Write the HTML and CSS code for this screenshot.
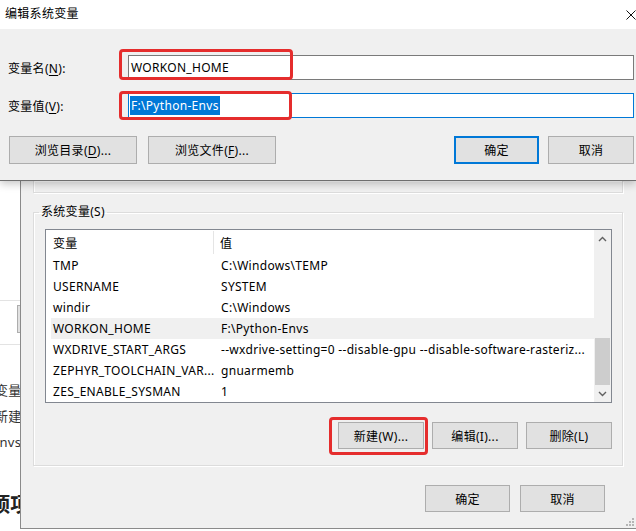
FILE: index.html
```html
<!DOCTYPE html>
<html lang="zh-CN">
<head>
    <meta charset="UTF-8">
    <title>编辑系统变量</title>
    <link rel="stylesheet" href="styles.css">
</head>
<body>
    <!-- Página de fundo (só a borda esquerda aparece) -->
    <div class="page">
        <div class="page-bar"><span class="page-btn"></span></div>
        <p class="page-line">变量</p>
        <p class="page-line">新建</p>
        <p class="page-line page-line-shift">Envs</p>
        <h2 class="page-head">顶项</h2>
    </div>

    <!-- Janela de variáveis de ambiente -->
    <div class="env-dialog">
        <div class="group group-user"></div>
        <fieldset class="group group-system">
            <legend>系统变量(S)</legend>
            <div class="var-list">
                <div class="var-main">
                    <div class="var-head">
                        <span class="col-name">变量</span>
                        <span class="col-value">值</span>
                    </div>
                    <div class="var-row"><span class="col-name">TMP</span><span class="col-value">C:\Windows\TEMP</span></div>
                    <div class="var-row"><span class="col-name">USERNAME</span><span class="col-value">SYSTEM</span></div>
                    <div class="var-row"><span class="col-name">windir</span><span class="col-value">C:\Windows</span></div>
                    <div class="var-row is-hover"><span class="col-name">WORKON_HOME</span><span class="col-value">F:\Python-Envs</span></div>
                    <div class="var-row"><span class="col-name">WXDRIVE_START_ARGS</span><span class="col-value">--wxdrive-setting=0 --disable-gpu --disable-software-rasteriz...</span></div>
                    <div class="var-row"><span class="col-name">ZEPHYR_TOOLCHAIN_VAR...</span><span class="col-value">gnuarmemb</span></div>
                    <div class="var-row"><span class="col-name">ZES_ENABLE_SYSMAN</span><span class="col-value">1</span></div>
                </div>
                <div class="scrollbar">
                    <span class="sb-arrow">
                        <svg width="9" height="6" viewBox="0 0 9 6"><path d="M1 5L4.5 1.5L8 5" fill="none" stroke="#606060" stroke-width="1.4"/></svg>
                    </span>
                    <span class="sb-track"><span class="sb-thumb"></span></span>
                    <span class="sb-arrow">
                        <svg width="9" height="6" viewBox="0 0 9 6"><path d="M1 1L4.5 4.5L8 1" fill="none" stroke="#606060" stroke-width="1.4"/></svg>
                    </span>
                </div>
            </div>
            <div class="group-actions">
                <span class="btn-wrap">
                    <button class="btn">新建(W)...</button>
                    <span class="mark mark-new"></span>
                </span>
                <button class="btn">编辑(I)...</button>
                <button class="btn">删除(L)</button>
            </div>
        </fieldset>
        <div class="env-actions">
            <button class="btn btn-small">确定</button>
            <button class="btn btn-small">取消</button>
        </div>
        <svg class="grip" width="10" height="10" viewBox="0 0 10 10">
            <rect x="8" y="2" width="2" height="2" fill="#b5b5b5"/>
            <rect x="5" y="5" width="2" height="2" fill="#b5b5b5"/>
            <rect x="8" y="5" width="2" height="2" fill="#b5b5b5"/>
            <rect x="2" y="8" width="2" height="2" fill="#b5b5b5"/>
            <rect x="5" y="8" width="2" height="2" fill="#b5b5b5"/>
            <rect x="8" y="8" width="2" height="2" fill="#b5b5b5"/>
        </svg>
    </div>

    <!-- Janela "editar variável" por cima -->
    <div class="edit-dialog">
        <div class="titlebar">
            <span class="title">编辑系统变量</span>
            <svg class="close" width="10" height="10" viewBox="0 0 10 10"><path d="M0.5 0.5L9.5 9.5M9.5 0.5L0.5 9.5" stroke="#111" stroke-width="1"/></svg>
        </div>
        <div class="edit-body">
            <div class="field-row">
                <label class="field-label">变量名(<u>N</u>):</label>
                <div class="field-input">
                    WORKON_HOME
                    <span class="mark mark-name"></span>
                </div>
            </div>
            <div class="field-row">
                <label class="field-label">变量值(<u>V</u>):</label>
                <div class="field-input is-focus">
                    <span class="selected">F:\Python-Envs</span>
                    <span class="mark mark-value"></span>
                </div>
            </div>
            <div class="edit-actions">
                <button class="btn btn-wide">浏览目录(<u>D</u>)...</button>
                <button class="btn btn-wide">浏览文件(<u>F</u>)...</button>
                <span class="spacer"></span>
                <button class="btn btn-default">确定</button>
                <button class="btn">取消</button>
            </div>
        </div>
    </div>
</body>
</html>
```

FILE: styles.css
```css
* {
    box-sizing: border-box;
}

body {
    margin: 0;
    width: 636px;
    height: 531px;
    position: relative;
    overflow: hidden;
    background-color: #fff;
    font-family: "Noto Sans", "Noto Sans CJK SC", sans-serif;
    font-size: 12px;
    letter-spacing: 0.3px;
    color: #000;
}

u {
    text-decoration-thickness: 1px;
    text-underline-offset: 2px;
}

/* Página de fundo */
.page {
    width: 300px;
    padding-top: 300px;
}

.page-bar {
    height: 45px;
    border-top: 1px solid #e3e3e3;
    border-bottom: 1px solid #e3e3e3;
    padding: 4px 0 0 17px;
}

.page-btn {
    display: block;
    width: 80px;
    height: 28px;
    background-color: #e1e1e1;
    border: 1px solid #adadad;
}

.page-line {
    margin: 0;
    font-size: 13px;
    line-height: 26px;
    text-indent: -5px;
    color: #333;
    white-space: nowrap;
}

.page-line:first-of-type {
    margin-top: 32px;
}

.page-line-shift {
    text-indent: -8px;
}

.page-head {
    margin: 35px 0 0;
    font-size: 20px;
    line-height: 30px;
    text-indent: -10px;
    color: #222;
    white-space: nowrap;
}

/* Botões estilo Windows */
.btn {
    font: inherit;
    letter-spacing: inherit;
    color: #000;
    height: 28px;
    background-color: #e1e1e1;
    border: 1px solid #adadad;
    padding: 0;
    margin: 0;
    border-radius: 0;
}

.btn-wide {
    width: 128px;
}

.btn-default {
    width: 85px;
    border: 2px solid #0078d7;
}

.btn-small {
    width: 85px;
    height: 27px;
}

.btn-wrap {
    position: relative;
    display: flex;
}

/* Marcações vermelhas */
.mark {
    position: absolute;
    border: 3px solid #e52d2d;
    border-radius: 4px;
    pointer-events: none;
}

.mark-name {
    left: -10px;
    top: -7px;
    width: 174px;
    height: 31px;
}

.mark-value {
    left: -10px;
    top: -3px;
    width: 173px;
    height: 29px;
}

.mark-new {
    left: -9px;
    top: -5px;
    width: 99px;
    height: 38px;
}

/* Janela de variáveis de ambiente */
.env-dialog {
    position: absolute;
    left: 20px;
    top: 181px;
    width: 616px;
    height: 348px;
    background-color: #f0f0f0;
    border-left: 1px solid #8a8a8a;
    border-bottom: 1px solid #8a8a8a;
}

.group {
    margin: 0 0 0 12px;
    width: 590px;
    border: 1px solid #dcdcdc;
    box-shadow: 1px 1px 0 #fff, inset 1px 1px 0 #fff;
}

.group-user {
    height: 12px;
    border-top: none;
}

.group-system {
    margin-top: 11px;
    padding: 0 0 16px;
    min-inline-size: 0;
}

.group-system legend {
    margin-left: 5px;
    padding: 0 2px;
    line-height: 16px;
    color: #000;
}

.var-list {
    display: flex;
    margin: 9px 0 0 11px;
    width: 567px;
    height: 174px;
    border: 1px solid #828790;
    background-color: #fff;
    overflow: hidden;
}

.var-main {
    flex: 1;
    min-width: 0;
    overflow: hidden;
}

.var-head {
    display: flex;
    height: 25px;
    align-items: center;
}

.var-head .col-name {
    width: 168px;
    height: 23px;
    display: flex;
    align-items: center;
    padding-left: 7px;
    border-right: 1px solid #e5e5e5;
}

.var-head .col-value {
    padding-left: 6px;
}

.var-row {
    display: flex;
    align-items: center;
    height: 21px;
    margin-left: 5px;
    white-space: nowrap;
}

.var-row.is-hover {
    background-color: #f0f0f0;
}

.var-row .col-name {
    width: 163px;
    flex-shrink: 0;
    padding-left: 2px;
    overflow: hidden;
}

.var-row .col-value {
    padding-left: 7px;
    overflow: hidden;
}

.scrollbar {
    width: 17px;
    display: flex;
    flex-direction: column;
    background-color: #f0f0f0;
}

.sb-arrow {
    height: 17px;
    display: flex;
    align-items: center;
    justify-content: center;
}

.sb-track {
    flex: 1;
    display: flex;
    flex-direction: column;
    justify-content: flex-end;
}

.sb-thumb {
    height: 47px;
    margin: 0 1px;
    background-color: #cdcdcd;
}

.group-actions {
    display: flex;
    justify-content: flex-end;
    gap: 8px;
    margin: 19px 10px 0 0;
}

.group-actions .btn {
    width: 86px;
    height: 27px;
}

.env-actions {
    display: flex;
    justify-content: flex-end;
    gap: 10px;
    margin: 19px 31px 0 0;
}

.grip {
    position: absolute;
    right: 2px;
    bottom: 2px;
}

/* Janela de edição */
.edit-dialog {
    position: absolute;
    left: 0;
    top: 0;
    width: 636px;
    height: 181px;
    background-color: #f0f0f0;
    border-bottom: 1px solid #6e6e6e;
    box-shadow: 0 3px 8px rgba(0, 0, 0, 0.22);
}

.titlebar {
    height: 29px;
    background-color: #fff;
    display: flex;
    align-items: center;
    justify-content: space-between;
    padding: 0 0 3px 5px;
}

.close {
    margin-top: 3px;
}

.edit-body {
    padding: 26px 2px 0 8px;
}

.field-row {
    display: flex;
    align-items: center;
    margin-bottom: 13px;
}

.field-label {
    width: 120px;
}

.field-input {
    position: relative;
    flex: 1;
    height: 25px;
    display: flex;
    align-items: center;
    padding: 0 2px;
    background-color: #fff;
    border: 1px solid #7a7a7a;
}

.field-input.is-focus {
    border-color: #0078d7;
}

.selected {
    margin-left: -1px;
    padding: 0 1px;
    line-height: 19px;
    background-color: #0078d7;
    color: #fff;
}

.edit-actions {
    display: flex;
    gap: 11px;
    margin: 18px 0 0 1px;
}

.spacer {
    flex: 1;
}

.edit-actions .btn-default + .btn {
    width: 86px;
    margin-left: -2px;
}
```
